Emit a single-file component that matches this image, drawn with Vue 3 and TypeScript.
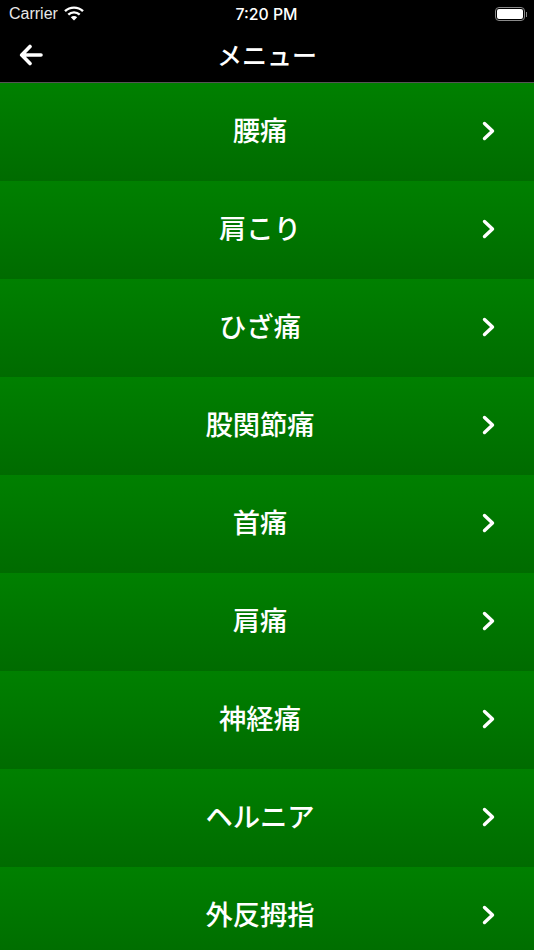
<script setup lang="ts">
const items: string[] = [
  "腰痛",
  "肩こり",
  "ひざ痛",
  "股関節痛",
  "首痛",
  "肩痛",
  "神経痛",
  "ヘルニア",
  "外反拇指",
]
</script>

<template>
  <div class="screen">
    <header class="top">
      <div class="status">
        <div class="status-left">
          <span class="carrier">Carrier</span>
          <svg class="wifi" width="20" height="15" viewBox="0 0 20 15">
            <path d="M1 5.2a13 13 0 0 1 18 0" fill="none" stroke="#fff" stroke-width="2.4" />
            <path d="M4.3 8.6a8.3 8.3 0 0 1 11.4 0" fill="none" stroke="#fff" stroke-width="2.4" />
            <path d="M10 14.6 6.8 11.3a4.6 4.6 0 0 1 6.4 0z" fill="#fff" />
          </svg>
        </div>
        <span class="time">7:20 PM</span>
        <div class="status-right">
          <span class="battery"><span class="battery-fill"></span></span>
          <span class="battery-cap"></span>
        </div>
      </div>
      <div class="nav">
        <svg class="back" width="24" height="22" viewBox="0 0 24 22">
          <path d="M11 2.5 2.7 11l8.3 8.5M3.5 11H22" fill="none" stroke="#fff" stroke-width="3.6" stroke-linecap="round" stroke-linejoin="round" />
        </svg>
        <span class="title">メニュー</span>
      </div>
    </header>
    <ul class="menu">
      <li v-for="item in items" :key="item" class="row">
        <span class="label">{{ item }}</span>
        <svg class="chevron" width="14" height="20" viewBox="0 0 14 20">
          <path d="M2.5 2.5 10.5 10l-8 7.5" fill="none" stroke="#fff" stroke-width="3.4" stroke-linecap="round" stroke-linejoin="round" />
        </svg>
      </li>
    </ul>
  </div>
</template>

<style scoped>
.screen {
  width: 534px;
  height: 950px;
  overflow: hidden;
  background: #000;
  font-family: "Liberation Sans", "Noto Sans CJK JP", sans-serif;
  color: #fff;
}

.top {
  height: 83px;
  box-sizing: border-box;
  border-bottom: 1px solid #555;
}

.status {
  height: 28px;
  display: flex;
  align-items: center;
  justify-content: space-between;
  position: relative;
  padding: 0 6px 0 9px;
}

.status-left,
.status-right {
  display: flex;
  align-items: center;
}

.carrier {
  font-size: 16px;
  color: #e8e8e8;
}

.wifi {
  margin-left: 6px;
  margin-top: -1px;
}

.time {
  font-size: 15.8px;
  font-weight: 500;
  position: absolute;
  left: -1px;
  right: 0;
  text-align: center;
  font-family: "Inter", "Liberation Sans", sans-serif;
}

.status-right {
  position: relative;
  left: -1px;
}

.battery {
  width: 30px;
  height: 14px;
  box-sizing: border-box;
  border: 1.3px solid #8a8a8a;
  border-radius: 4px;
  padding: 1px;
  display: flex;
}

.battery-fill {
  flex: 1;
  background: #fff;
  border-radius: 2px;
}

.battery-cap {
  width: 1.5px;
  height: 5px;
  margin-left: 1px;
  background: #8a8a8a;
}

.nav {
  height: 54px;
  display: flex;
  align-items: center;
  justify-content: center;
  position: relative;
}

.back {
  position: absolute;
  left: 19px;
  top: 16px;
}

.title {
  font-size: 25px;
  font-weight: 500;
  margin-top: -3px;
}

.menu {
  list-style: none;
  margin: 0;
  padding: 0;
}

.row {
  height: 98px;
  box-sizing: border-box;
  padding-bottom: 6px;
  display: flex;
  align-items: center;
  position: relative;
  background: linear-gradient(#008000, #006b00);
}

.label {
  width: 520px;
  text-align: center;
  font-size: 27.3px;
  font-weight: 500;
}

.chevron {
  position: absolute;
  left: 482px;
  top: 38px;
}
</style>
